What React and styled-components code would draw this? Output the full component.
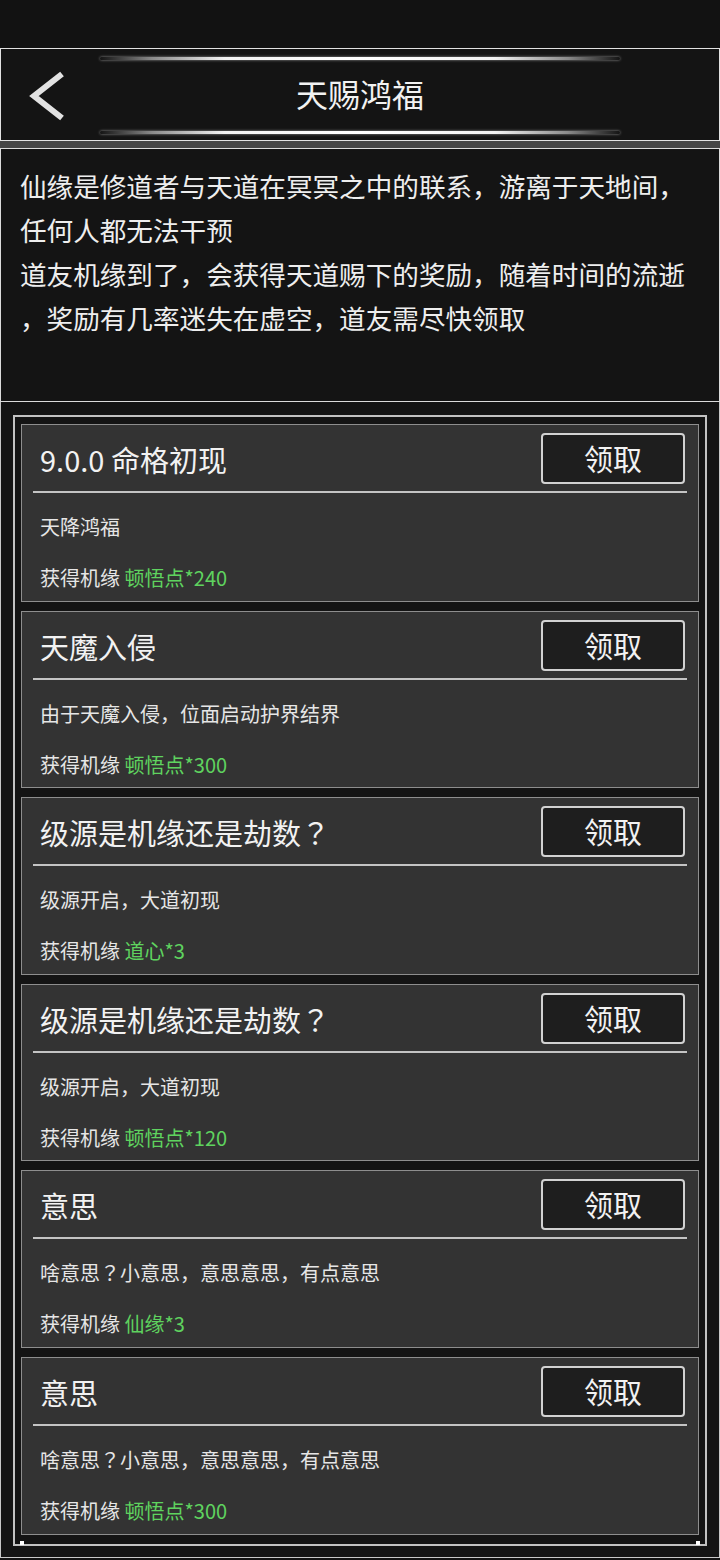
import React from 'react';
import styled, { createGlobalStyle } from 'styled-components';

const GlobalStyle = createGlobalStyle`
  * { box-sizing: border-box; }
  body {
    margin: 0;
    background: #121212;
    font-family: "Noto Sans CJK SC", "Noto Sans", sans-serif;
  }
`;

const Page = styled.div`
  width: 720px;
  padding-top: 48px;
`;

const Header = styled.div`
  height: 93px;
  border: 1px solid #e2e2e2;
  background: #141414;
  padding: 8px 0 6px;
  display: flex;
  flex-direction: column;
`;

const GlowLine = styled.div`
  width: 520px;
  height: 3px;
  margin: 0 auto;
  border-radius: 2px;
  background: linear-gradient(90deg, rgba(255,255,255,0) 0%, #8a8a8a 10%, #f2f2f2 24%, #ffffff 50%, #f2f2f2 76%, #8a8a8a 90%, rgba(255,255,255,0) 100%);
  box-shadow: 0 0 3px rgba(255,255,255,0.55);
`;

const HeaderRow = styled.div`
  height: 71px;
  display: grid;
  grid-template-columns: 1fr auto 1fr;
  align-items: center;
  padding-left: 28px;
`;

const BackIcon = styled.svg`
  width: 36px;
  height: 50px;
  display: block;
`;

const Title = styled.div`
  font-size: 32px;
  color: #f2f2f2;
  line-height: 1;
  margin: -6px 0 0 -28px;
`;

const Band = styled.div`
  height: 7px;
  background: #464646;
`;

const Intro = styled.div`
  height: 254px;
  border: 1px solid #dcdcdc;
  background: #141414;
  padding: 15px 0 0 19px;
`;

const IntroLine = styled.div`
  font-size: 26.6px;
  line-height: 44px;
  color: #eeeeee;
  white-space: nowrap;
`;

const Panel = styled.div`
  border: 1px solid #c8c8c8;
  border-top: none;
  background: #141414;
  padding: 13px 12px 11px;
`;

const Frame = styled.div`
  position: relative;
  border: 2px solid #c2c2c2;
  padding: 7px 6px 0;

  &::before, &::after {
    content: "";
    position: absolute;
    bottom: -1px;
    width: 4px;
    height: 4px;
    background: #ffffff;
  }
  &::before { left: 5px; }
  &::after { right: 5px; }
`;

const Card = styled.div`
  height: 177.6px;
  margin-bottom: 9px;
  border: 1px solid #8e8e8e;
  background: #333333;
  padding: 8px 11px 0;
  display: flex;
  flex-direction: column;
`;

const CardHead = styled.div`
  height: 51px;
  display: flex;
  align-items: center;
  justify-content: space-between;
`;

const CardTitle = styled.div`
  padding: 1px 0 0 7px;
  font-size: 29px;
  color: #f2f2f2;
  white-space: nowrap;
`;

// centred full-width question mark, as drawn in the reference
const Ask = styled.span`
  font-family: "Noto Sans CJK JP", "Noto Sans CJK SC", sans-serif;
`;

const ClaimButton = styled.button`
  width: 144px;
  height: 51px;
  margin-right: 2px;
  border: 2px solid #d2d2d2;
  border-radius: 4px;
  background: #1e1e1e;
  color: #f2f2f2;
  font-family: inherit;
  font-size: 29px;
  line-height: 1;
  padding: 0;
  cursor: pointer;
`;

const Divider = styled.div`
  height: 2px;
  margin-top: 7px;
  background: #c4c4c4;
`;

const Desc = styled.div`
  margin-top: 14px;
  padding-left: 7px;
  font-size: 20px;
  line-height: 40px;
  color: #e6e6e6;
  white-space: nowrap;
`;

const Reward = styled(Desc)`
  margin-top: 11px;
`;

const Green = styled.span`
  color: #5fd35f;
`;

const intro = [
  '仙缘是修道者与天道在冥冥之中的联系，游离于天地间，',
  '任何人都无法干预',
  '道友机缘到了，会获得天道赐下的奖励，随着时间的流逝',
  '，奖励有几率迷失在虚空，道友需尽快领取',
];

const gifts = [
  { title: '9.0.0 命格初现', desc: '天降鸿福', reward: '顿悟点*240' },
  { title: '天魔入侵', desc: '由于天魔入侵，位面启动护界结界', reward: '顿悟点*300' },
  { title: '级源是机缘还是劫数？', desc: '级源开启，大道初现', reward: '道心*3' },
  { title: '级源是机缘还是劫数？', desc: '级源开启，大道初现', reward: '顿悟点*120' },
  { title: '意思', desc: '啥意思？小意思，意思意思，有点意思', reward: '仙缘*3' },
  { title: '意思', desc: '啥意思？小意思，意思意思，有点意思', reward: '顿悟点*300' },
];

// split text so every full-width question mark gets the centred glyph
const withAsk = (text) =>
  text.split('？').flatMap((part, i) => (i === 0 ? [part] : [<Ask key={i}>？</Ask>, part]));

const App = () => {
  return (
    <Page>
      <GlobalStyle />
      <Header>
        <GlowLine />
        <HeaderRow>
          <BackIcon viewBox="0 0 36 50">
            <polyline points="33,3 5,25 33,47" fill="none" stroke="#e2e2e2" strokeWidth="6" />
          </BackIcon>
          <Title>天赐鸿福</Title>
          <div />
        </HeaderRow>
        <GlowLine />
      </Header>
      <Band />
      <Intro>
        {intro.map((line, i) => <IntroLine key={i}>{line}</IntroLine>)}
      </Intro>
      <Panel>
        <Frame>
          {gifts.map((g, i) => (
            <Card key={i}>
              <CardHead>
                <CardTitle>{withAsk(g.title)}</CardTitle>
                <ClaimButton>领取</ClaimButton>
              </CardHead>
              <Divider />
              <Desc>{withAsk(g.desc)}</Desc>
              <Reward>获得机缘 <Green>{g.reward}</Green></Reward>
            </Card>
          ))}
        </Frame>
      </Panel>
    </Page>
  );
};

export default App;
